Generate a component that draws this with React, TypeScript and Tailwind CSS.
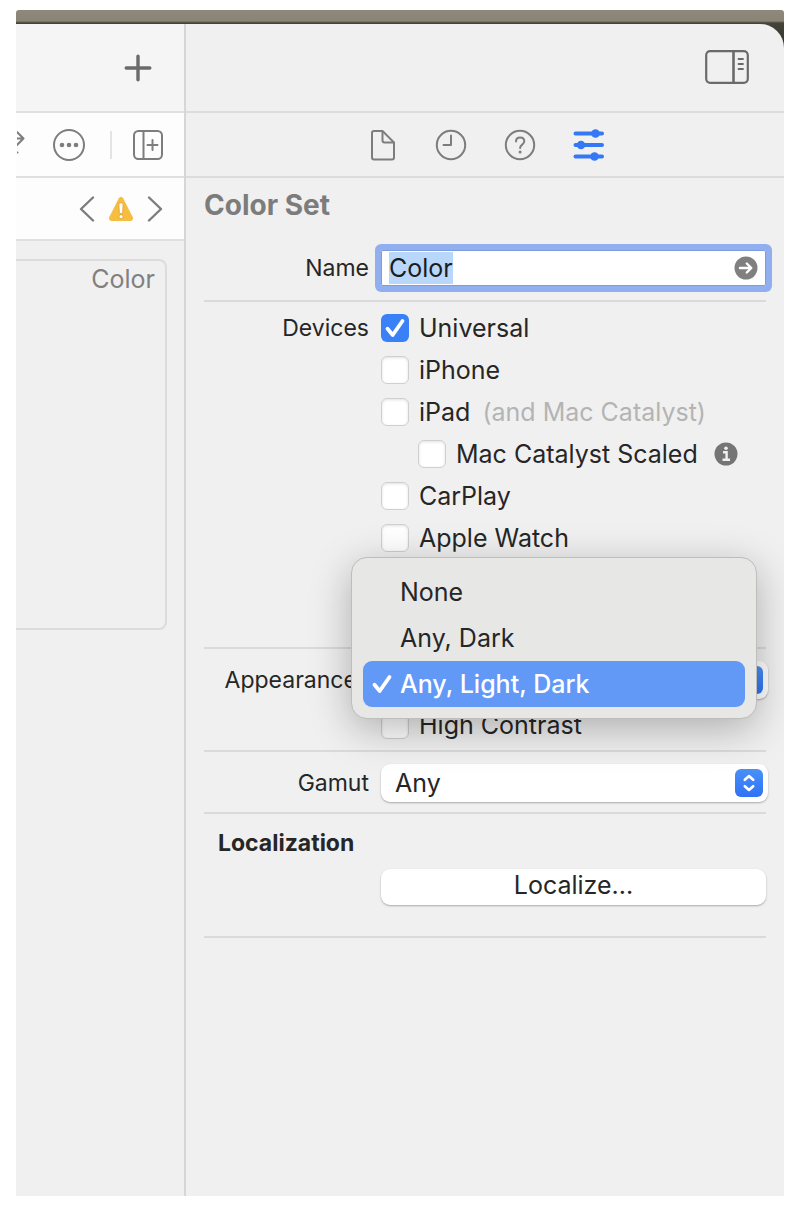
import React from 'react';

const DEVICES = [
  { id: 'universal', label: 'Universal', checked: true },
  { id: 'iphone', label: 'iPhone' },
  { id: 'ipad', label: 'iPad', note: '(and Mac Catalyst)' },
  { id: 'catalyst', label: 'Mac Catalyst Scaled', nested: true, info: true },
  { id: 'carplay', label: 'CarPlay' },
  { id: 'watch', label: 'Apple Watch' },
];

const APPEARANCES = ['None', 'Any, Dark', 'Any, Light, Dark'];

function PlusIcon() {
  return (
    <svg className="size-7" viewBox="0 0 28 28" fill="none" stroke="#6a6a6a" strokeWidth="3.400" strokeLinecap="round">
      <path d="M14 2.200v23.600M2.200 14h23.600" />
    </svg>
  );
}

function SwapIcon() {
  return (
    <svg className="h-8 w-2" viewBox="0 0 8 32" fill="none" stroke="#7d7d7d" strokeWidth="2" strokeLinecap="round" strokeLinejoin="round">
      <path d="M-6 9.500h12.500M0 3l6.500 6.500L0 16" />
      <path d="M-4 23.500h4.500" />
    </svg>
  );
}

function MoreIcon() {
  return (
    <svg className="size-8" viewBox="0 0 32 32" fill="none" stroke="#7d7d7d" strokeWidth="2">
      <circle cx="16" cy="16" r="15" />
      <g fill="#7d7d7d" stroke="none">
        <circle cx="9" cy="16" r="2.300" />
        <circle cx="16" cy="16" r="2.300" />
        <circle cx="23" cy="16" r="2.300" />
      </g>
    </svg>
  );
}

function AddEditorIcon() {
  return (
    <svg className="size-[30px]" viewBox="0 0 30 30" fill="none" stroke="#7d7d7d" strokeWidth="2" strokeLinecap="round">
      <rect x="1" y="1" width="28" height="28" rx="4.500" />
      <path d="M10.500 1v28" />
      <path d="M19.500 10v10M14.500 15h10" />
    </svg>
  );
}

function Chevron({ d }: { d: string }) {
  return (
    <svg className="h-[26px] w-4" viewBox="0 0 16 26" fill="none" stroke="#7d7d7d" strokeWidth="2.400" strokeLinecap="round" strokeLinejoin="round">
      <path d={d} />
    </svg>
  );
}

function WarningIcon() {
  return (
    <svg className="size-[26px]" viewBox="0 0 26 26">
      <path d="M10.800 2.200Q13-.8 15.200 2.200L24.800 21.300Q25.600 24.600 22.600 24.900H3.400Q.4 24.600 1.200 21.300Z" fill="#f6bd41" />
      <g fill="#fff" stroke="#dda32f" strokeWidth=".8">
        <path d="M10.900 8.500q0-1.800 2.100-1.800t2.100 1.800l-.4 7.700q-.2 1.400-1.700 1.400t-1.700-1.400z" />
        <circle cx="13" cy="20.700" r="2" />
      </g>
    </svg>
  );
}

function SidebarIcon() {
  return (
    <svg className="h-[34px] w-11" viewBox="0 0 44 34" fill="none" stroke="#6a6a6a" strokeWidth="2.200" strokeLinecap="round">
      <rect x="1.200" y="1.200" width="41.600" height="31.600" rx="4" />
      <path d="M28.500 1v32" strokeWidth="2.600" />
      <path d="M33.500 9h4.500M33.500 14h4.500M33.500 19h4.500" strokeWidth="1.800" />
    </svg>
  );
}

function FileIcon() {
  return (
    <svg className="size-8" viewBox="0 0 32 32" fill="none" stroke="#7d7d7d" strokeWidth="2" strokeLinejoin="round">
      <path d="M16.500 2H8Q6 2 6 4v24.500q0 2 2 2h18q2 0 2-2V13.500z" />
      <path d="M16.500 2v9.500q0 2 2 2H28" />
    </svg>
  );
}

function ClockIcon() {
  return (
    <svg className="size-8" viewBox="0 0 32 32" fill="none" stroke="#7d7d7d" strokeWidth="2" strokeLinecap="round" strokeLinejoin="round">
      <circle cx="16" cy="16" r="14.200" />
      <path d="M16 6.500V16H8.500" />
    </svg>
  );
}

function HelpIcon() {
  return (
    <svg className="size-8" viewBox="0 0 32 32" fill="none" stroke="#7d7d7d" strokeWidth="2" strokeLinecap="round" strokeLinejoin="round">
      <circle cx="16" cy="16" r="14.200" />
      <path d="M12 12.500c0-2.400 1.700-3.900 4.100-3.900s4.200 1.500 4.200 3.700c0 3.500-4.200 3.200-4.200 6.700" />
      <circle cx="16.100" cy="23" r="1.500" fill="#7d7d7d" stroke="none" />
    </svg>
  );
}

function SlidersIcon() {
  return (
    <svg className="size-8" viewBox="0 0 32 32" fill="#3478f6" stroke="#3478f6" strokeLinecap="round">
      <path d="M2.500 4.500h26.500M2.500 16h26.500M2.500 27.500h26.500" strokeWidth="4" />
      <g stroke="none">
        <circle cx="22.500" cy="4.500" r="4.300" />
        <circle cx="8" cy="16" r="4.300" />
        <circle cx="21.500" cy="27.500" r="4.300" />
      </g>
    </svg>
  );
}

function GoIcon() {
  return (
    <svg className="size-6" viewBox="0 0 24 24" fill="none" stroke="#fff" strokeWidth="2.400" strokeLinecap="round" strokeLinejoin="round">
      <circle cx="12" cy="12" r="11.500" fill="#808080" stroke="none" />
      <path d="M6 12h11M12.800 7.500L17.300 12l-4.500 4.500" />
    </svg>
  );
}

function InfoIcon() {
  return (
    <svg className="size-6" viewBox="0 0 24 24" fill="none" stroke="#f0f0f0" strokeWidth="2.400">
      <circle cx="12" cy="12" r="11.500" fill="#757575" stroke="none" />
      <path d="M9 10.300h3.600V18M8.500 17.800h7.500" />
      <circle cx="12" cy="6.300" r="1.800" fill="#f0f0f0" stroke="none" />
    </svg>
  );
}

function CheckIcon({ className }: { className: string }) {
  return (
    <svg className={className} viewBox="0 0 28 28" fill="none" stroke="#fff" strokeWidth="3.800" strokeLinecap="round" strokeLinejoin="round">
      <path d="M6.500 14.800l5.200 6.200L21.500 7" />
    </svg>
  );
}

function StepperBadge() {
  return (
    <span className="pointer-events-none absolute top-[5px] right-[5px] flex h-7 w-7 rounded-[6px] bg-linear-to-b from-[#4a90f8] to-[#2f72f5]">
      <svg className="size-7" viewBox="0 0 28 28" fill="none" stroke="#fff" strokeWidth="2.600" strokeLinecap="round" strokeLinejoin="round">
        <path d="M9.800 10.800L14 7l4.200 3.800M9.800 17.200L14 21l4.200-3.800" />
      </svg>
    </span>
  );
}

function Checkbox({ id, defaultChecked }: { id: string; defaultChecked?: boolean }) {
  return (
    <span className="relative flex size-7 shrink-0">
      <input
        id={id}
        type="checkbox"
        defaultChecked={defaultChecked}
        className="peer size-7 appearance-none rounded-[6px] border border-[#cfcfcf] bg-white shadow-[inset_0_1px_3px_rgba(0,0,0,0.12)] checked:border-transparent checked:bg-[#3a80f7] checked:shadow-none"
      />
      <CheckIcon className="pointer-events-none absolute inset-0 hidden size-7 peer-checked:block" />
    </span>
  );
}

function Field({ label, htmlFor, children }: { label?: string; htmlFor?: string; children: React.ReactNode }) {
  return (
    <div className="flex items-center gap-3">
      <span className="w-[165px] shrink-0 text-right text-[23px]">
        {label && <label htmlFor={htmlFor}>{label}</label>}
      </span>
      {children}
    </div>
  );
}

export default function App() {
  const [selected, setSelected] = React.useState('Any, Light, Dark');
  const nameRef = React.useRef<HTMLInputElement>(null);

  React.useEffect(() => {
    nameRef.current?.focus();
    nameRef.current?.select();
  }, []);

  return (
    <div className="min-h-screen bg-white pt-2.5 pr-3 pb-[18px] pl-4 font-['Inter','Liberation_Sans',sans-serif] text-[25px] leading-8 text-[#262626]">
      <div className="flex min-h-[calc(100vh-28px)] flex-col rounded-t-[3px] bg-[linear-gradient(to_bottom,#8f897c_0px,#8a8477_11px,#45423a_13px,#35332b_40px)] pt-3.5">
        <div className="flex grow overflow-hidden rounded-tr-3xl bg-[#f0f0f0]">
          <aside className="w-[170px] shrink-0 border-r-2 border-[#d6d6d6]">
            <div className="flex h-[89px] items-center justify-end border-b-2 border-[#e0e0e0] bg-[#f5f5f5] pr-8">
              <button type="button" aria-label="Add"><PlusIcon /></button>
            </div>
            <div className="flex h-[65px] items-center justify-end border-b-2 border-[#e0e0e0] bg-[#fdfdfd] pr-[21px]">
              <button type="button" aria-label="Swap"><SwapIcon /></button>
              <button type="button" aria-label="More" className="ml-7"><MoreIcon /></button>
              <span className="mr-[21px] ml-[25px] h-7 w-0.5 bg-[#e4e4e4]" />
              <button type="button" aria-label="Add editor"><AddEditorIcon /></button>
            </div>
            <div className="flex h-[63px] items-center justify-end gap-[13px] border-b-2 border-[#e0e0e0] bg-[#fdfdfd] pr-[21px]">
              <button type="button" aria-label="Previous"><Chevron d="M14 1.500L2 13l12 11.500" /></button>
              <button type="button" aria-label="Warnings"><WarningIcon /></button>
              <button type="button" aria-label="Next"><Chevron d="M2 1.500L14 13 2 24.500" /></button>
            </div>
            <div className="mt-[18px] mr-[17px] h-[371px] rounded-r-lg border-y-2 border-r-2 border-[#dcdcdc] pt-0.5 pr-2.5 text-right text-[#808080]">
              Color
            </div>
          </aside>

          <main className="min-w-0 grow">
            <div className="flex h-[89px] items-center justify-end border-b-2 border-[#dcdcdc] pr-[35px] pb-0.5">
              <button type="button" aria-label="Inspectors"><SidebarIcon /></button>
            </div>
            <nav className="flex h-[65px] items-center justify-center gap-[37px] border-b-2 border-[#dcdcdc]">
              <button type="button" aria-label="File"><FileIcon /></button>
              <button type="button" aria-label="History"><ClockIcon /></button>
              <button type="button" aria-label="Help"><HelpIcon /></button>
              <button type="button" aria-label="Attributes"><SlidersIcon /></button>
            </nav>

            <div className="px-[18px]">
              <section className="border-b-2 border-[#dadada] pt-[11px] pb-3.5">
                <h1 className="mb-[29px] text-[28px] font-bold text-[#7c7c7c]">Color Set</h1>
                <Field label="Name" htmlFor="name">
                  <div className="flex h-9 min-w-0 grow items-center rounded-xs bg-white px-2 shadow-[inset_0_0_0_1px_#7f9be0] ring-[6px] ring-[#91aeef]">
                    <input
                      id="name"
                      ref={nameRef}
                      defaultValue="Color"
                      className="h-8 min-w-0 grow bg-transparent leading-8 text-[#1c1c1c] outline-none selection:bg-[#b9d6fb] selection:text-[#1c1c1c]"
                    />
                    <button type="button" aria-label="Go"><GoIcon /></button>
                  </div>
                </Field>
              </section>

              <section className="flex gap-3 border-b-2 border-[#dadada] pt-3 pb-[95px]">
                <span className="w-[165px] shrink-0 text-right text-[23px] leading-7">Devices</span>
                <div className="flex flex-col gap-3.5">
                  {DEVICES.map((device) => (
                    <div key={device.id} className={device.nested ? 'flex h-7 items-center pl-[37px]' : 'flex h-7 items-center'}>
                      <Checkbox id={device.id} defaultChecked={device.checked} />
                      <label htmlFor={device.id} className="pl-2.5 whitespace-nowrap">{device.label}</label>
                      {device.note && <span className="pl-3 whitespace-nowrap text-[#b4b4b4]">{device.note}</span>}
                      {device.info && <button type="button" aria-label="Info" className="ml-4"><InfoIcon /></button>}
                    </div>
                  ))}
                </div>
              </section>

              <section className="flex flex-col gap-3 border-b-2 border-[#dadada] pt-3 pb-[11px]">
                <Field label="Appearances" htmlFor="appearances">
                  <div className="relative -mr-0.5 grow">
                    <button
                      id="appearances"
                      type="button"
                      aria-haspopup="listbox"
                      aria-expanded="true"
                      className="block h-[38px] w-full rounded-[9px] bg-white shadow-[0_1px_2px_rgba(0,0,0,0.3)]"
                    />
                    <StepperBadge />
                    <div
                      role="listbox"
                      className="absolute top-[-104px] right-[11px] left-[-30px] z-10 rounded-2xl border border-[#bdbdbb] bg-[#e7e7e5] p-[11px] shadow-[0_10px_40px_rgba(0,0,0,0.28)]"
                    >
                      {APPEARANCES.map((option) => (
                        <button
                          key={option}
                          type="button"
                          role="option"
                          aria-selected={option === selected}
                          onClick={() => setSelected(option)}
                          className={
                            option === selected
                              ? 'flex h-[46px] w-full items-center rounded-[9px] bg-[#6299f7] pl-[5px] font-medium text-white'
                              : 'flex h-[46px] w-full items-center pl-[5px]'
                          }
                        >
                          <span className="w-8">{option === selected && <CheckIcon className="size-7" />}</span>
                          {option}
                        </button>
                      ))}
                    </div>
                  </div>
                </Field>
                <Field>
                  <div className="flex h-7 items-center">
                    <Checkbox id="contrast" />
                    <label htmlFor="contrast" className="pl-2.5">High Contrast</label>
                  </div>
                </Field>
              </section>

              <section className="border-b-2 border-[#dadada] pt-3 pb-2.5">
                <Field label="Gamut" htmlFor="gamut">
                  <div className="relative -mr-0.5 grow">
                    <select
                      id="gamut"
                      className="block h-[38px] w-full appearance-none rounded-[9px] bg-white pl-3.5 shadow-[0_1px_2px_rgba(0,0,0,0.3)]"
                    >
                      <option>Any</option>
                    </select>
                    <StepperBadge />
                  </div>
                </Field>
              </section>

              <section className="border-b-2 border-[#dadada] pt-[13px] pb-[31px]">
                <h2 className="mb-2.5 pl-3.5 text-[23px] font-bold">Localization</h2>
                <Field>
                  <button type="button" className="h-9 grow rounded-[9px] bg-white pb-1 leading-8 shadow-[0_1px_2px_rgba(0,0,0,0.3)]">
                    Localize...
                  </button>
                </Field>
              </section>
            </div>
          </main>
        </div>
      </div>
    </div>
  );
}
